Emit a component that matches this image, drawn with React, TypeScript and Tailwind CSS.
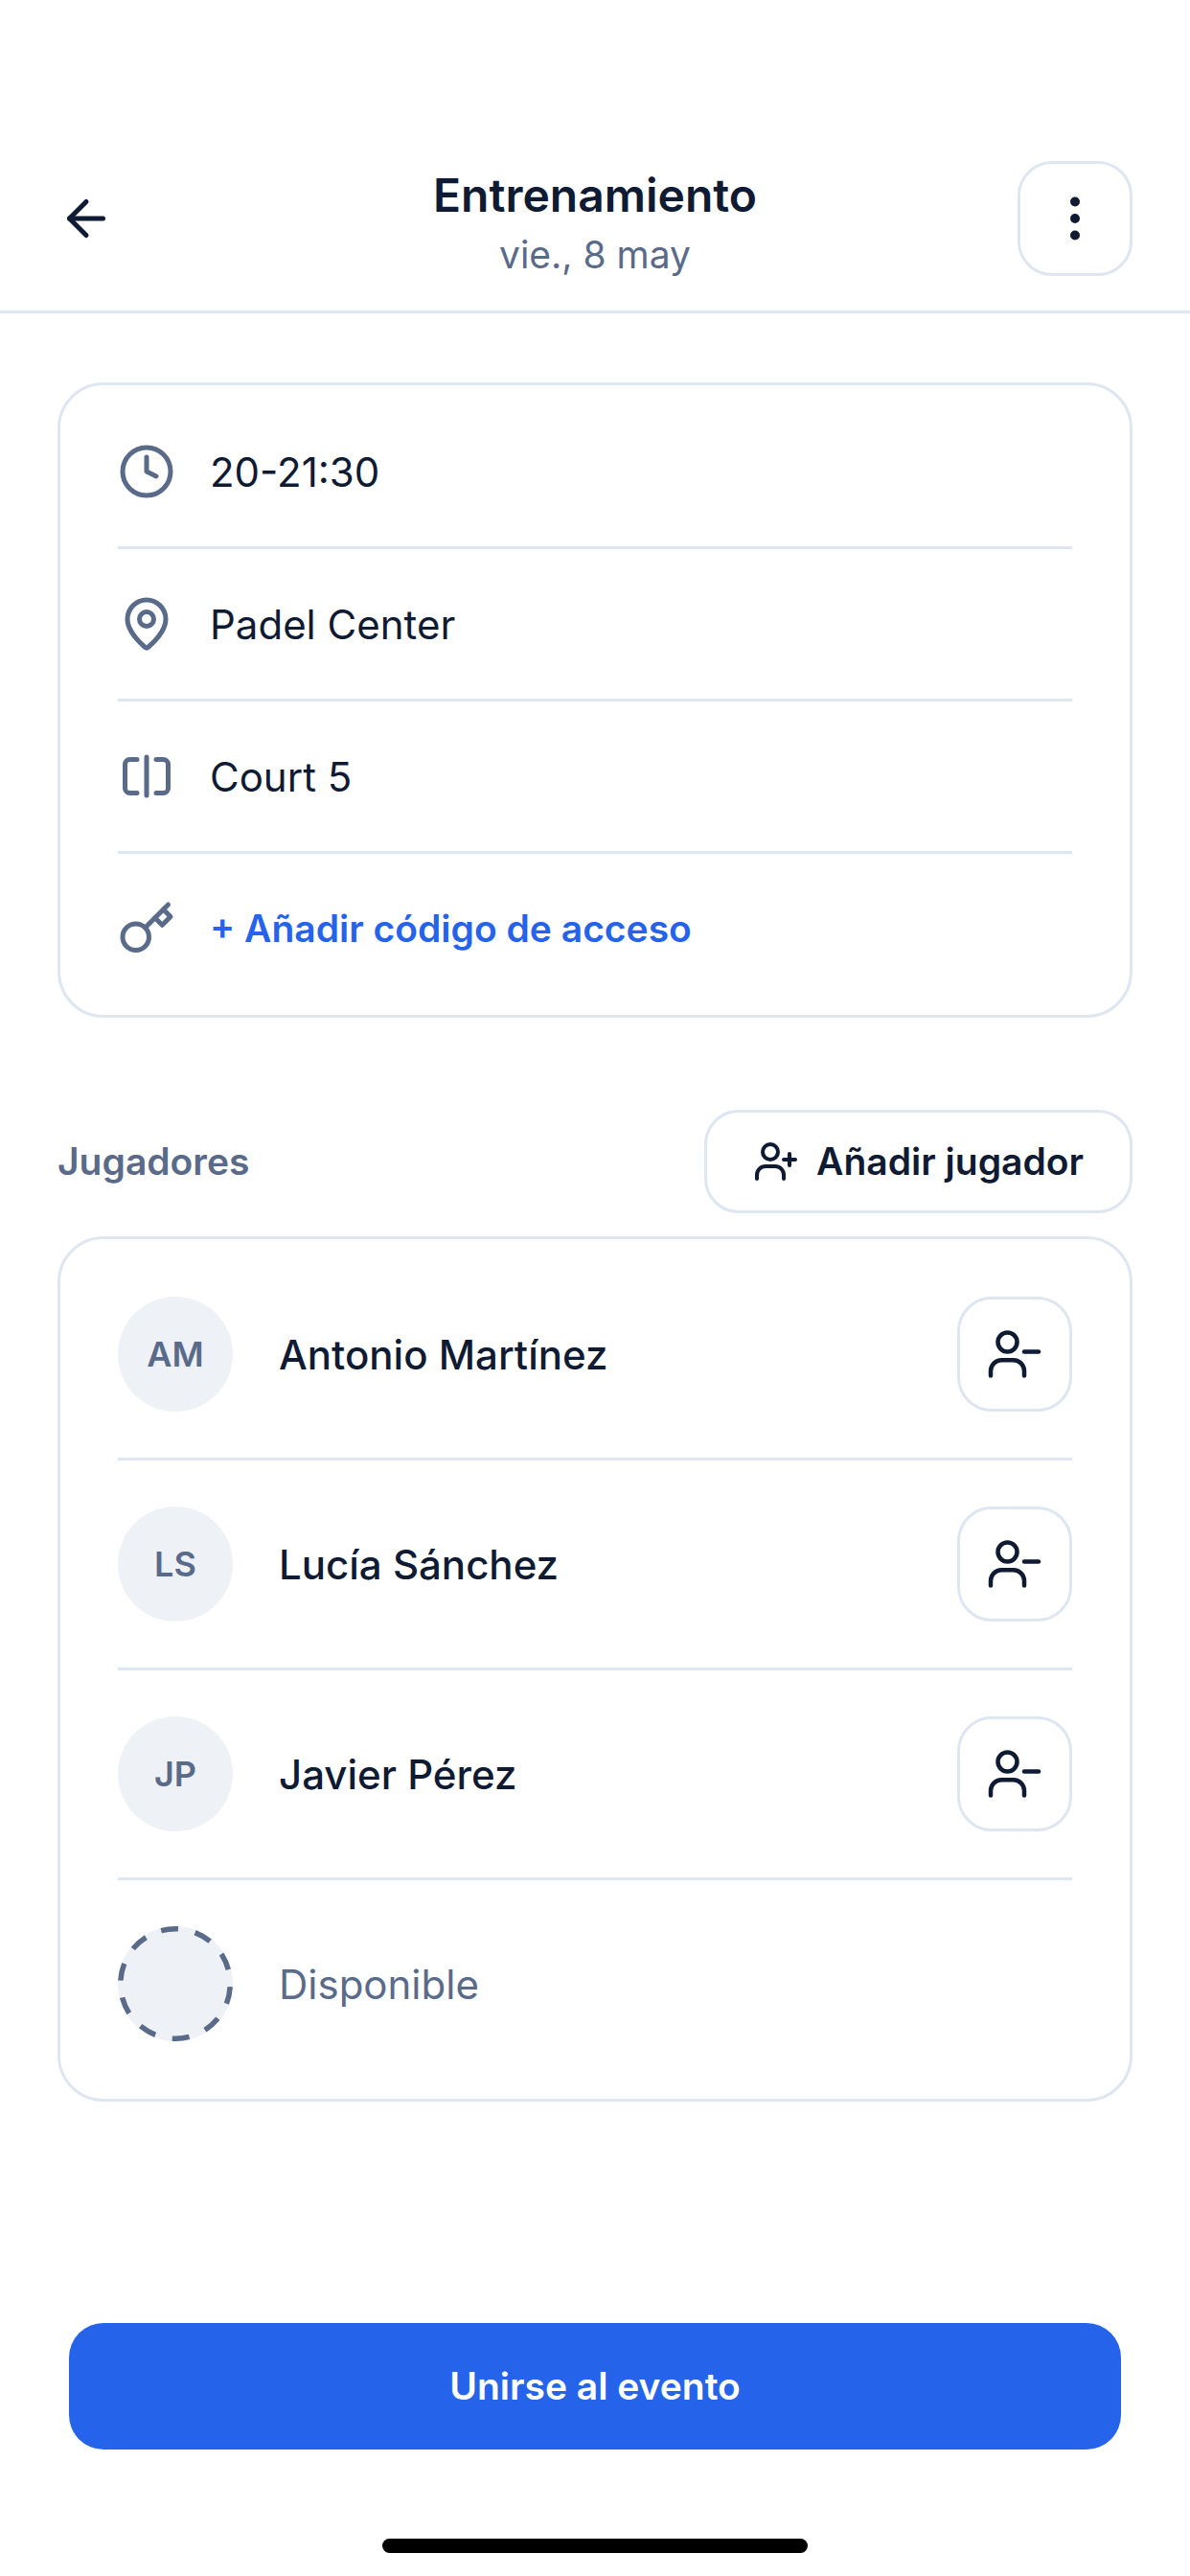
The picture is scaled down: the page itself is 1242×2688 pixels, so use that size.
import React from "react";

const Stroke = ({ size, cls, sw = 2, children }: { size: number; cls: string; sw?: number; children: React.ReactNode }) => (
  <svg width={size} height={size} viewBox="0 0 24 24" fill="none" stroke="currentColor" strokeWidth={sw} strokeLinecap="round" strokeLinejoin="round" className={cls}>
    {children}
  </svg>
);

const Person = () => (
  <>
    <path d="M16 21v-2a4.5 4.5 0 0 0-4.5-4.5h-5A4.5 4.5 0 0 0 2 19v2" />
    <circle cx="9" cy="7" r="4" />
  </>
);

const Divider = () => <div className="h-[3px] bg-[#dee6f1]" />;

const InfoRow = ({ icon, children, cls }: { icon: React.ReactNode; children: React.ReactNode; cls: string }) => (
  <div className="flex h-[156px] items-center gap-[36px]">
    <Stroke size={60} cls="shrink-0 text-[#5a6b8a]">{icon}</Stroke>
    <span className={cls}>{children}</span>
  </div>
);

const PlayerRow = ({ initials, name }: { initials: string; name: string }) => (
  <div className="flex h-[216px] items-center">
    <div className="flex h-[120px] w-[120px] items-center justify-center rounded-full bg-[#eef2f7] text-[36px] font-semibold text-[#5a6b8a]">
      {initials}
    </div>
    <span className="ml-[48px] flex-1 text-[42px] font-medium text-[#0f1b33]">{name}</span>
    <button className="flex h-[120px] w-[120px] items-center justify-center rounded-[36px] border-[3px] border-[#dee6f1] bg-white text-[#0f1b33]">
      <Stroke size={60} cls="" sw={1.8}>
        <Person />
        <line x1="22" x2="16" y1="11" y2="11" />
      </Stroke>
    </button>
  </div>
);

export default function App() {
  return (
    <div className="flex h-[2688px] w-[1242px] flex-col bg-white font-['Inter',sans-serif]">
      <header className="grid grid-cols-[120px_1fr_120px] items-center border-b-[3px] border-[#dee6f1] pt-[168px] pb-[36px] pl-[60px] pr-[60px]">
        <Stroke size={60} cls="text-[#0f1b33]">
          <path d="m12 19-7-7 7-7" />
          <path d="M19 12H5" />
        </Stroke>
        <div className="flex flex-col items-center pt-[6px]">
          <h1 className="text-[48px] leading-[60px] font-semibold text-[#0f1b33]">Entrenamiento</h1>
          <p className="mt-[9px] text-[39px] leading-[45px] text-[#5a6b8a]">vie., 8 may</p>
        </div>
        <button className="flex h-[120px] w-[120px] items-center justify-center rounded-[36px] border-[3px] border-[#dee6f1] text-[#0f1b33]">
          <Stroke size={60} cls="">
            <circle cx="12" cy="12" r="1" />
            <circle cx="12" cy="5" r="1" />
            <circle cx="12" cy="19" r="1" />
          </Stroke>
        </button>
      </header>

      <main className="flex flex-col px-[60px] pt-[72px]">
        <section className="rounded-[48px] border-[3px] border-[#dee6f1] px-[60px] py-[12px]">
          <InfoRow cls="text-[42px] text-[#0f1b33]" icon={<><circle cx="12" cy="12" r="10" /><path d="M12 6v6l4 2" /></>}>20-21:30</InfoRow>
          <Divider />
          <InfoRow cls="text-[42px] text-[#0f1b33]" icon={<><path d="M20 10c0 4.993-5.539 10.193-7.399 11.799a1 1 0 0 1-1.202 0C9.539 20.193 4 14.993 4 10a8 8 0 0 1 16 0" /><circle cx="12" cy="10" r="3" /></>}>Padel Center</InfoRow>
          <Divider />
          <InfoRow cls="text-[42px] text-[#0f1b33]" icon={<><path d="M8 19H5c-1.1 0-2-.9-2-2V7c0-1.1.9-2 2-2h3" /><path d="M16 5h3c1.1 0 2 .9 2 2v10c0 1.1-.9 2-2 2h-3" /><line x1="12" x2="12" y1="4" y2="20" /></>}>Court 5</InfoRow>
          <Divider />
          <InfoRow cls="text-[39px] font-semibold text-[#2563eb]" icon={<><circle cx="7.5" cy="15.5" r="5.5" /><path d="m21 2-9.6 9.6" /><path d="m15.5 7.5 3 3L22 7l-3-3" /></>}>+ Añadir código de acceso</InfoRow>
        </section>

        <div className="mt-[96px] flex items-center justify-between">
          <h2 className="text-[39px] font-semibold text-[#5a6b8a]">Jugadores</h2>
          <button className="flex h-[108px] items-center gap-[18px] rounded-[36px] border-[3px] border-[#dee6f1] px-[48px] text-[39px] font-semibold text-[#0f1b33]">
            <Stroke size={48} cls="">
              <Person />
              <line x1="19" x2="19" y1="8" y2="14" />
              <line x1="22" x2="16" y1="11" y2="11" />
            </Stroke>
            Añadir jugador
          </button>
        </div>

        <section className="mt-[24px] rounded-[48px] border-[3px] border-[#dee6f1] px-[60px] py-[12px]">
          <PlayerRow initials="AM" name="Antonio Martínez" />
          <Divider />
          <PlayerRow initials="LS" name="Lucía Sánchez" />
          <Divider />
          <PlayerRow initials="JP" name="Javier Pérez" />
          <Divider />
          <div className="flex h-[216px] items-center">
            <svg width={120} height={120} viewBox="0 0 120 120" className="shrink-0">
              <circle cx="60" cy="60" r="60" fill="#eef2f7" />
              <circle cx="60" cy="60" r="57.25" fill="none" stroke="#5a6b8a" strokeWidth={5.5} strokeDasharray="18 17.97" transform="rotate(-105 60 60)" />
            </svg>
            <span className="ml-[48px] text-[42px] text-[#5a6b8a]">Disponible</span>
          </div>
        </section>
      </main>

      <footer className="mt-auto flex flex-col items-center">
        <button className="h-[132px] w-[1098px] rounded-[36px] bg-[#2563eb] text-[39px] font-semibold text-white">
          Unirse al evento
        </button>
        <div className="mt-[93px] mb-[24px] h-[15px] w-[444px] rounded-full bg-black" />
      </footer>
    </div>
  );
}
